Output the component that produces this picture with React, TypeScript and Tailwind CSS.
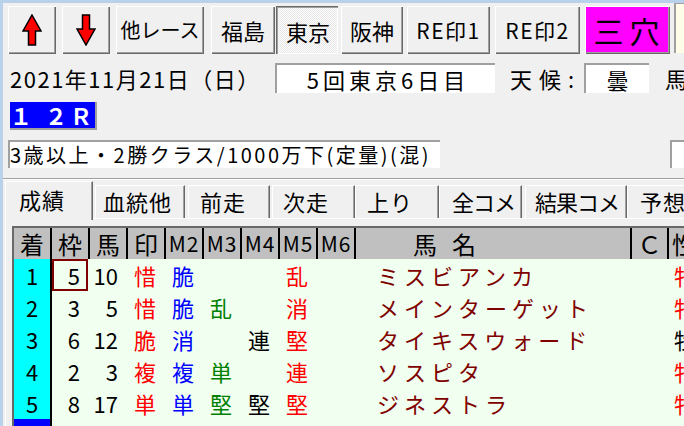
import React from 'react';

// classic 3D bevels
const raised =
  'shadow-[inset_1px_1px_#ffffff,inset_-1px_-1px_#696969,inset_-2px_-2px_#a0a0a0]';
const pressed =
  'shadow-[inset_1px_1px_#696969,inset_2px_2px_#a0a0a0,inset_-1px_-1px_#ffffff]';
const sunken = 'border-t-2 border-l-2 border-[#a0a0a0] bg-white';

type Row = {
  rank: string;
  waku: string;
  uma: string;
  marks: string[];
  name: string;
  sex: string;
  sexRed: boolean;
  active?: boolean;
};

const rows: Row[] = [
  { rank: '1', waku: '5', uma: '10', marks: ['惜', '脆', '', '', '乱', ''], name: 'ミスビアンカ', sex: '牝', sexRed: true },
  { rank: '2', waku: '3', uma: '5', marks: ['惜', '脆', '乱', '', '消', ''], name: 'メインターゲット', sex: '牝', sexRed: true },
  { rank: '3', waku: '6', uma: '12', marks: ['脆', '消', '', '連', '堅', ''], name: 'タイキスウォード', sex: '牡', sexRed: false },
  { rank: '4', waku: '2', uma: '3', marks: ['複', '複', '単', '', '連', ''], name: 'ソスピタ', sex: '牝', sexRed: true },
  { rank: '5', waku: '8', uma: '17', marks: ['単', '単', '堅', '堅', '堅', ''], name: 'ジネストラ', sex: '牝', sexRed: true },
  { rank: '6', waku: '7', uma: '14', marks: ['惜', '脆', '', '', '消', ''], name: 'ヴェルトハイム', sex: '牝', sexRed: true, active: true },
];

const markColors = [
  'text-[#ff0000]',
  'text-[#0000ff]',
  'text-[#008000]',
  'text-black',
  'text-[#ff0000]',
  'text-black',
];

const tabs = [
  { label: '血統他', cls: 'ml-[2px] w-[90px] pl-[7px] tracking-[1px]' },
  { label: '前走', cls: 'ml-[3px] w-[82px] pl-[11px] tracking-[1px]' },
  { label: '次走', cls: 'ml-[2px] w-[83px] pl-[10px] tracking-[1px]' },
  { label: '上り', cls: 'w-[84px] pl-[11px] tracking-[1px]' },
  { label: '全コメ', cls: 'w-[83px] pl-[12px] tracking-[-1px]' },
  { label: '結果コメ', cls: 'ml-[3px] w-[102px] pl-[9px] tracking-[-1px]' },
  { label: '予想', cls: 'w-[80px] pl-[12px] tracking-[1px]' },
];

function UpArrow() {
  return (
    <svg width="20" height="32" viewBox="0 0 20 32">
      <path
        d="M10 1 L19 17 L13.5 17 L13.5 31 L6.5 31 L6.5 17 L1 17 Z"
        fill="#ff0000"
        stroke="#000"
        strokeWidth="1.5"
      />
    </svg>
  );
}

function DownArrow() {
  return (
    <svg width="20" height="32" viewBox="0 0 20 32">
      <path
        d="M6.5 1 L13.5 1 L13.5 15 L19 15 L10 31 L1 15 L6.5 15 Z"
        fill="#ff0000"
        stroke="#000"
        strokeWidth="1.5"
      />
    </svg>
  );
}

function ToolButton({ className, children }: { className: string; children: React.ReactNode }) {
  return (
    <div className={`flex h-[48px] shrink-0 items-center justify-center whitespace-nowrap leading-none text-black ${className}`}>
      {children}
    </div>
  );
}

function HeaderCell({ className, children }: { className: string; children?: React.ReactNode }) {
  return (
    <div className={`flex h-full shrink-0 items-center border-r-2 border-black ${className}`}>
      {children}
    </div>
  );
}

function DataRow({ row, selected }: { row: Row; selected: boolean }) {
  return (
    <div className="flex h-[32px] bg-[#f0fff0] text-[22px] leading-none">
      <div
        className={`flex h-full w-[38px] shrink-0 items-center justify-center border-r-2 border-black ${
          row.active ? 'bg-[#0000ff] text-white' : 'bg-[#00ffff] text-black'
        }`}
      >
        {row.rank}
      </div>
      <div className="h-full w-[38px] shrink-0 pr-[2px]">
        <div
          className={`flex h-full w-[36px] items-center justify-end ${
            selected ? 'border-2 border-[#800000] pr-[6px]' : 'pr-[8px]'
          }`}
        >
          {row.waku}
        </div>
      </div>
      <div className="flex h-full w-[38px] shrink-0 items-center justify-end pr-[10px]">{row.uma}</div>
      {row.marks.map((m, i) => (
        <div
          key={i}
          className={`flex h-full w-[38px] shrink-0 items-center justify-center pr-[4px] ${markColors[i]}`}
        >
          {m}
        </div>
      ))}
      <div className="flex h-full w-[276px] shrink-0 items-center whitespace-nowrap pl-[21px] tracking-[5px] text-[#800000]">
        {row.name}
      </div>
      <div className="h-full w-[37px] shrink-0" />
      <div
        className={`flex h-full shrink-0 items-center pl-[5px] ${row.sexRed ? 'text-[#ff0000]' : 'text-black'}`}
      >
        {row.sex}
      </div>
    </div>
  );
}

export default function App() {
  return (
    <div className="h-[426px] w-[684px] overflow-hidden bg-[#b9d1ea] pl-[3px] pt-[3px] font-['Noto_Sans_CJK_JP',sans-serif] text-black">
      <div className="flex h-full flex-col bg-[#f0f0f0]">
        {/* toolbar */}
        <div className="mt-[3px] flex h-[48px] shrink-0 items-start pl-[5px]">
          <ToolButton className={`w-[48px] bg-[#f0f0f0] ${raised}`}>
            <UpArrow />
          </ToolButton>
          <ToolButton className={`ml-[6px] w-[48px] bg-[#f0f0f0] ${raised}`}>
            <DownArrow />
          </ToolButton>
          <ToolButton className={`ml-[6px] w-[88px] bg-[#f0f0f0] text-[20px] ${raised}`}>他レース</ToolButton>
          <ToolButton className={`ml-[7px] w-[64px] bg-[#f0f0f0] text-[22px] ${raised}`}>福島</ToolButton>
          <ToolButton
            className={`ml-[1px] w-[62px] bg-[image:repeating-conic-gradient(#ffffff_0%_25%,#e6e6e6_0%_50%)] bg-[length:2px_2px] pl-[2px] pt-[2px] text-[22px] ${pressed}`}
          >
            東京
          </ToolButton>
          <ToolButton className={`ml-[3px] w-[62px] bg-[#f0f0f0] text-[22px] ${raised}`}>阪神</ToolButton>
          <ToolButton className={`ml-[4px] w-[83px] bg-[#f0f0f0] text-[21px] tracking-[1.5px] ${raised}`}>
            RE印1
          </ToolButton>
          <ToolButton className={`ml-[5px] w-[85px] bg-[#f0f0f0] text-[21px] tracking-[1.5px] ${raised}`}>
            RE印2
          </ToolButton>
          <ToolButton className={`ml-[5px] w-[85px] bg-[#ff00ff] pl-[4px] text-[30px] tracking-[6px] ${raised}`}>
            三穴
          </ToolButton>
          <div className="-mt-[3px] ml-[4px] h-[50px] w-[20px] shrink-0 border-l-2 border-t border-[#a0a0a0] bg-[#fffde8]" />
        </div>

        {/* date / meeting / weather */}
        <div className="mt-[9px] flex h-[30px] shrink-0 items-center whitespace-nowrap text-[22px] leading-none">
          <div className="w-[272px] shrink-0 pl-[7px] tracking-[1.5px]">2021年11月21日（日）</div>
          <div className={`flex h-full w-[220px] shrink-0 items-center justify-center pl-[4px] tracking-[4px] ${sunken}`}>
            5回東京6日目
          </div>
          <div className="ml-[15px] w-[74px] shrink-0 tracking-[7px]">天候:</div>
          <div className={`flex h-full w-[65px] shrink-0 items-center justify-center ${sunken}`}>曇</div>
          <div className="ml-[16px] shrink-0">馬</div>
        </div>

        {/* race number */}
        <div className="ml-[7px] mt-[9px] flex h-[28px] w-[87px] shrink-0 items-center border-b-2 border-r-2 border-[#a0a0a0] bg-[#0000ff] text-[22px] font-bold leading-none text-white">
          <span className="w-[22px] text-center">１</span>
          <span className="ml-[13px] w-[22px] text-center">２</span>
          <span className="ml-[3px] w-[22px] text-center">Ｒ</span>
        </div>

        {/* race class */}
        <div className="mt-[10px] flex h-[28px] shrink-0">
          <div className={`ml-[5px] flex w-[432px] shrink-0 items-center whitespace-nowrap text-[20px] leading-none tracking-[2.5px] ${sunken}`}>
            3歳以上・2勝クラス/1000万下(定量)(混)
          </div>
          <div className={`ml-[230px] w-[40px] shrink-0 ${sunken}`} />
        </div>

        <div className="mt-[10px] h-px shrink-0 bg-[#a0a0a0]" />
        <div className="h-px shrink-0 bg-white" />

        {/* tabs */}
        <div className="mt-[1px] flex h-[37px] shrink-0 items-start whitespace-nowrap pl-[2px] text-[22px] leading-none">
          <div className="relative z-10 h-[39px] w-[88px] shrink-0 border-l border-r border-t border-l-white border-t-white border-r-[#696969] bg-[#f0f0f0] pl-[13px] pt-[6px] tracking-[1px] shadow-[inset_-1px_0_#a0a0a0]">
            成績
          </div>
          {tabs.map((t) => (
            <div
              key={t.label}
              className={`mt-[4px] h-[33px] shrink-0 overflow-hidden border-l border-r border-t border-l-white border-t-white border-r-[#696969] pt-[4px] shadow-[inset_-1px_0_#a0a0a0] ${t.cls}`}
            >
              {t.label}
            </div>
          ))}
        </div>

        {/* results grid */}
        <div className="ml-[2px] flex-1 border-l border-t border-white pl-[6px] pt-[7px]">
          <div className="border-l-2 border-t-2 border-[#696969]">
            <div className="flex h-[31px] bg-[#c0c0c0] text-[24px] leading-none">
              <HeaderCell className="w-[38px] justify-center">着</HeaderCell>
              <HeaderCell className="w-[38px] justify-center">枠</HeaderCell>
              <HeaderCell className="w-[38px] justify-center">馬</HeaderCell>
              <HeaderCell className="w-[38px] justify-center">印</HeaderCell>
              {['M2', 'M3', 'M4', 'M5', 'M6'].map((m) => (
                <HeaderCell key={m} className="w-[38px] justify-center text-[21px] tracking-[1px]">
                  {m}
                </HeaderCell>
              ))}
              <HeaderCell className="w-[276px] gap-[15px] pl-[57px]">
                <span>馬</span>
                <span>名</span>
              </HeaderCell>
              <HeaderCell className="w-[37px] justify-center">Ｃ</HeaderCell>
              <div className="flex h-full w-[60px] shrink-0 items-center pl-[3px]">性</div>
            </div>
            {rows.map((r, i) => (
              <DataRow key={r.rank} row={r} selected={i === 0} />
            ))}
          </div>
        </div>
      </div>
    </div>
  );
}
